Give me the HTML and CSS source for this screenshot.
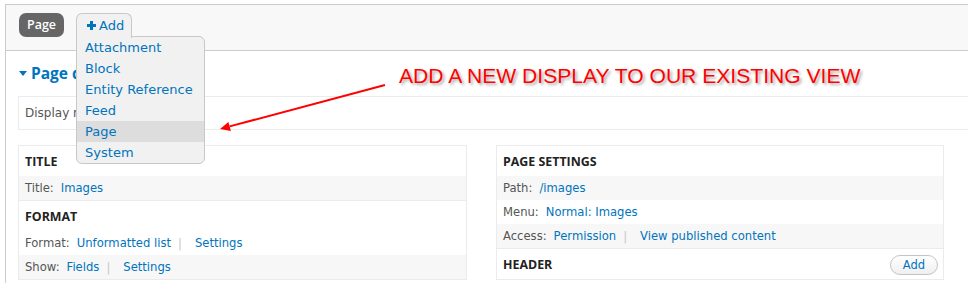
FILE: index.html
```html
<!DOCTYPE html>
<html lang="en">

<head>
    <meta charset="UTF-8">
    <meta name="viewport" content="width=device-width, initial-scale=1.0">
    <title>Views UI - Add display</title>
    <link rel="stylesheet" href="styles.css">
</head>

<body>
    <div class="views-ui">
        <div class="display-tabs">
            <div class="tab tab-active">Page</div>
            <div class="add-display">
                <div class="tab tab-add">
                    <svg class="plus" width="9" height="9" viewBox="0 0 9 9">
                        <path d="M3 0h3v3h3v3H6v3H3V6H0V3h3z" fill="#0074bd" />
                    </svg>
                    Add
                </div>
                <ul class="add-menu">
                    <li>Attachment</li>
                    <li>Block</li>
                    <li>Entity Reference</li>
                    <li>Feed</li>
                    <li class="hover">Page</li>
                    <li>System</li>
                </ul>
            </div>
        </div>

        <div class="display-body">
            <h2 class="details-title"><span class="caret"></span>Page details</h2>
            <div class="display-name">Display name: Page</div>

            <div class="columns">
                <div class="column">
                    <div class="section">
                        <h3 class="section-title">TITLE</h3>
                        <div class="row odd"><span class="label">Title:</span><a>Images</a></div>
                    </div>
                    <div class="section">
                        <h3 class="section-title">FORMAT</h3>
                        <div class="row"><span class="label">Format:</span><a>Unformatted list</a><span class="sep">|</span><a>Settings</a></div>
                        <div class="row odd"><span class="label">Show:</span><a>Fields</a><span class="sep">|</span><a>Settings</a></div>
                    </div>
                </div>
                <div class="column">
                    <div class="section">
                        <h3 class="section-title">PAGE SETTINGS</h3>
                        <div class="row odd"><span class="label">Path:</span><a>/images</a></div>
                        <div class="row"><span class="label">Menu:</span><a>Normal: Images</a></div>
                        <div class="row odd"><span class="label">Access:</span><a>Permission</a><span class="sep">|</span><a>View published content</a></div>
                    </div>
                    <div class="section">
                        <h3 class="section-title">HEADER <span class="add-button">Add</span></h3>
                    </div>
                </div>
            </div>
        </div>
    </div>

    <div class="annotation">ADD A NEW DISPLAY TO OUR EXISTING VIEW</div>
    <svg class="arrow" width="175" height="55" viewBox="0 0 175 55">
        <line x1="170" y1="5" x2="14.7" y2="46.4" stroke="#ff0000" stroke-width="2" />
        <polygon points="5,49 15.9,51 13.4,42" fill="#ff0000" />
    </svg>
</body>

</html>
```

FILE: styles.css
```css
* {
    margin: 0;
    padding: 0;
    box-sizing: border-box;
}

body {
    height: 283px;
    background: #ffffff;
    font-family: 'DejaVu Sans', sans-serif;
    font-size: 11.6px;
    color: #555555;
    overflow: hidden;
}

a {
    color: #0074bd;
}

.views-ui {
    margin: 4px 0 0 5px;
    width: 1000px;
    height: 279px;
    border-top: 1px solid #cccccc;
    border-left: 1px solid #cccccc;
    overflow: hidden;
}

/* display tabs */

.display-tabs {
    display: flex;
    gap: 12px;
    height: 46px;
    padding: 8px 0 0 13px;
    background: #f8f8f8;
    border-bottom: 1px solid #cccccc;
}

.tab {
    height: 24px;
    line-height: 24px;
    border-radius: 7px;
}

.tab-active {
    padding: 0 8px;
    background: #666666;
    color: #ffffff;
    font-family: 'Open Sans', sans-serif;
    font-weight: 600;
    font-size: 12.5px;
}

.add-display {
    position: relative;
    z-index: 2;
}

.tab-add {
    position: relative;
    z-index: 1;
    display: flex;
    align-items: center;
    gap: 3px;
    width: 56px;
    height: 25px;
    padding-left: 10px;
    background: #f1f1f1;
    border: 1px solid #c8c8c8;
    border-bottom: none;
    border-radius: 6px 6px 0 0;
    color: #0074bd;
    font-size: 13px;
}

.plus {
    margin-top: -1px;
}

.add-menu {
    position: absolute;
    top: 23px;
    left: 0;
    width: 129px;
    list-style: none;
    background: #f1f1f1;
    border: 1px solid #c8c8c8;
    border-radius: 0 6px 6px 6px;
    overflow: hidden;
}

.add-menu li {
    height: 21px;
    line-height: 21px;
    padding-left: 8px;
    color: #0074bd;
    font-size: 13px;
}

.add-menu li.hover {
    background: #dddddd;
}

/* display body */

.display-body {
    padding: 12px 0 0 12px;
}

.details-title {
    display: flex;
    align-items: center;
    height: 20px;
    color: #0074bd;
    font-family: 'Open Sans', sans-serif;
    font-size: 15.5px;
    font-weight: 700;
}

.caret {
    width: 0;
    height: 0;
    margin: 1px 4px 0 1px;
    border-left: 4px solid transparent;
    border-right: 4px solid transparent;
    border-top: 5px solid #0074bd;
}

.display-name {
    height: 34px;
    line-height: 32px;
    margin-top: 13px;
    padding-left: 6px;
    border: 1px solid #ebebeb;
    border-right: none;
    font-size: 12px;
}

.columns {
    display: grid;
    grid-template-columns: 449px 448px;
    column-gap: 29px;
    margin-top: 15px;
}

.column {
    border: 1px solid #ebebeb;
    border-bottom: none;
}

.section {
    border-bottom: 1px solid #ebebeb;
}

.section-title {
    display: flex;
    justify-content: space-between;
    align-items: center;
    height: 30px;
    padding: 1px 5px 0 6px;
    color: #222222;
    font-family: 'Open Sans', sans-serif;
    font-size: 12.4px;
    font-weight: 700;
}

.row {
    height: 24px;
    line-height: 24px;
    padding-left: 6px;
    white-space: nowrap;
}

.row.odd {
    background: #f7f7f7;
}

.label {
    margin-right: 7px;
}

.sep {
    margin: 0 13px 0 7px;
    color: #c8c8c8;
}

.add-button {
    width: 48px;
    height: 20px;
    line-height: 18px;
    text-align: center;
    border: 1px solid #c4c4c4;
    border-radius: 10px;
    background: linear-gradient(#ffffff, #efefef);
    color: #0074bd;
    font-family: 'DejaVu Sans', sans-serif;
    font-size: 11.5px;
    font-weight: normal;
}

/* annotation overlay */

.annotation {
    position: absolute;
    left: 399px;
    top: 64px;
    line-height: 24px;
    color: #ff0000;
    font-family: 'Liberation Sans', Arial, sans-serif;
    font-size: 21.1px;
    white-space: nowrap;
    text-shadow: 2px 2px 3px rgba(0, 0, 0, 0.35);
}

.arrow {
    position: absolute;
    left: 215px;
    top: 80px;
}
```
